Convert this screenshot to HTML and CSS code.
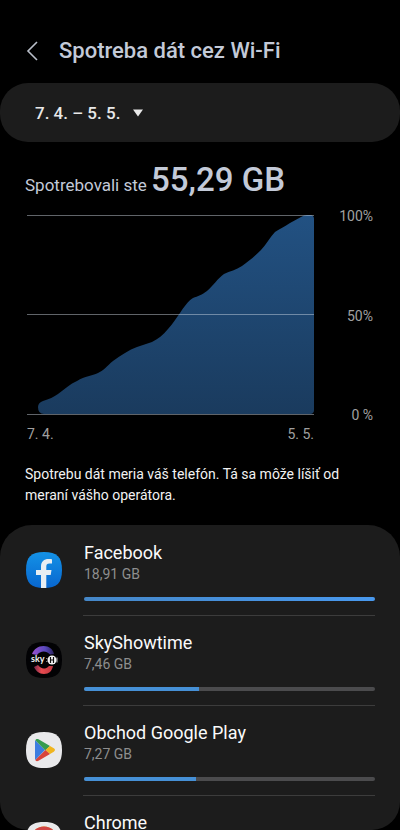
FILE: index.html
```html
<!DOCTYPE html>
<html lang="sk">
<head>
<meta charset="utf-8">
<meta name="viewport" content="width=device-width, initial-scale=1">
<title>Spotreba dát cez Wi-Fi</title>
<link rel="stylesheet" href="styles.css">
</head>
<body>
<header class="header">
  <button class="back" type="button" aria-label="Späť">
    <svg width="12" height="20" viewBox="0 0 12 20"><path d="M11 1 2 10l9 9" fill="none" stroke="currentColor" stroke-width="1.6"/></svg>
  </button>
  <h1 class="title">Spotreba dát cez Wi-Fi</h1>
</header>
<main class="content">
  <label class="period">
    <select class="period-select" aria-label="Obdobie"><option>7. 4. – 5. 5.</option></select>
    <svg class="caret" width="10" height="8" viewBox="0 0 10 8"><path d="M0 .5h10L5 7.5z" fill="currentColor"/></svg>
  </label>
  <section class="usage">
    <p class="total">Spotrebovali ste <strong class="amount">55,29 GB</strong></p>
    <div class="chart">
      <svg class="plot" viewBox="0 0 287 200" preserveAspectRatio="none">
        <defs><linearGradient id="area" x1="0" y1="0" x2="0" y2="1"><stop offset="0" stop-color="#225182"/><stop offset="1" stop-color="#1a3b5e"/></linearGradient></defs>
        <path fill="url(#area)" d="M11 192C11 189 13 187 16 186C22 184 27 182 31 179C38 174 43 169 50 166C58 161 65 161 71 158C76 156 80 151 86 146C94 140 102 135 110 132C115 130 120 129 125 127C131 124 136 120 141 114C146 109 149 103 153 98C157 92 161 86 166 83C171 81 175 80 180 76C186 71 191 63 197 59C203 56 209 55 215 51C221 47 228 41 234 35C239 30 243 22 248 17C252 14 257 12 263 8L274 2Q277 0 280 0H283Q287 0 287 4V195Q287 199 283 199H17Q11 199 11 192Z"/>
        <path d="M0 .5h287M0 99.5h287M0 199.5h287" stroke="#d5dde8" stroke-opacity=".45"/>
      </svg>
      <div class="y-axis"><span>100%</span><span>50%</span><span>0 %</span></div>
      <div class="x-axis"><span>7. 4.</span><span>5. 5.</span></div>
    </div>
    <p class="note">Spotrebu dát meria váš telefón. Tá sa môže líšiť od meraní vášho operátora.</p>
  </section>
  <ul class="apps">
    <li class="app">
      <svg class="icon" viewBox="0 0 36 36">
        <defs><linearGradient id="fb" x1="0" y1="0" x2="0" y2="1"><stop offset="0" stop-color="#1492e6"/><stop offset="1" stop-color="#0866cf"/></linearGradient></defs>
        <path fill="url(#fb)" d="M18 0C31 0 36 5 36 18S31 36 18 36 0 31 0 18 5 0 18 0Z"/>
        <path fill="#e8edf2" d="M15 36V23h-5v-5h5v-3.500C15 9.500 18 7 22.500 7c1.500 0 3 .2 3.500.3v4.200h-2.500c-2.500 0-3.200 1.200-3.200 3V18h5.200l-.8 5h-4.400v13Z"/>
      </svg>
      <div class="details">
        <h2 class="name">Facebook</h2>
        <p class="size">18,91 GB</p>
        <progress class="bar full" max="1891" value="1891" aria-label="Facebook"></progress>
      </div>
    </li>
    <li class="app">
      <svg class="icon" viewBox="0 0 36 36">
        <defs>
          <linearGradient id="skyTop"><stop offset="0" stop-color="#9a51cf"/><stop offset=".6" stop-color="#5848bd"/><stop offset="1" stop-color="#29235c"/></linearGradient>
          <linearGradient id="skyBottom"><stop offset="0" stop-color="#78294f"/><stop offset=".4" stop-color="#e84b50"/><stop offset="1" stop-color="#bd3540"/></linearGradient>
        </defs>
        <path fill="#020204" d="M18 0C31 0 36 5 36 18S31 36 18 36 0 31 0 18 5 0 18 0Z"/>
        <path fill="url(#skyTop)" d="M6 12C8 7 12 4 17.500 4S27 7 28 12L24 12.500C20 8 14 9 11 13Z"/>
        <path fill="url(#skyBottom)" d="M8 25C10 29 13 32 18 32s8-3 9-8h-4c-4 4-8 3-11-1Z"/>
        <text class="sky-text" x="5" y="20">sky</text>
        <circle cx="26" cy="18" r="4.500" fill="#f4f4f6"/>
        <path d="M24.500 15v6M27.500 15v6M24.500 18h3" stroke="#111" stroke-width="1.200"/>
        <path d="M20.800 16v1m0 2v1M31 15.500v5" stroke="#ddd" stroke-width=".8"/>
      </svg>
      <div class="details">
        <h2 class="name">SkyShowtime</h2>
        <p class="size">7,46 GB</p>
        <progress class="bar" max="1891" value="746" aria-label="SkyShowtime"></progress>
      </div>
    </li>
    <li class="app">
      <svg class="icon" viewBox="0 0 36 36">
        <path fill="#e9e9eb" d="M18 0C31 0 36 5 36 18S31 36 18 36 0 31 0 18 5 0 18 0Z"/>
        <path fill="#3c7de0" d="M9.300 8.200 19 18 9.300 28C9 27.500 9 27 9 26.500v-17c0-.5 0-.9.3-1.300Z"/>
        <path fill="#359c4f" d="M9.300 8.200c.7-1.500 2-1.600 3.200-.9L24 14l-4.600 4.400Z"/>
        <path fill="#f0b51f" d="m24 14 3.800 2.300c1.600.9 1.600 2.500 0 3.400L24 22l-4.600-4Z"/>
        <path fill="#d8453b" d="m19.400 18 4.600 4-11.500 6.700c-1.200.8-2.500.6-3.200-.7Z"/>
      </svg>
      <div class="details">
        <h2 class="name">Obchod Google Play</h2>
        <p class="size">7,27 GB</p>
        <progress class="bar" max="1891" value="727" aria-label="Obchod Google Play"></progress>
      </div>
    </li>
    <li class="app">
      <svg class="icon" viewBox="0 0 36 36">
        <path fill="#e9e9eb" d="M18 0C31 0 36 5 36 18S31 36 18 36 0 31 0 18 5 0 18 0Z"/>
        <circle cx="18" cy="18" r="13.500" fill="#f0b51f"/>
        <path fill="#359c4f" d="M6.300 11.200A13.500 13.500 0 0 0 18 31.500l6-10Z"/>
        <path fill="#d14545" d="M6.300 11.200a13.500 13.500 0 0 1 23.400 0Z"/>
        <circle cx="18" cy="18" r="6.500" fill="#e9e9eb"/><circle cx="18" cy="18" r="5" fill="#3c7de0"/>
      </svg>
      <div class="details">
        <h2 class="name">Chrome</h2>
      </div>
    </li>
  </ul>
</main>
</body>
</html>
```
FILE: styles.css
```css
* { box-sizing: border-box; }
body {
  margin: 0;
  height: 100vh;
  display: flex;
  flex-direction: column;
  overflow: hidden;
  background: #000;
  color: #f2f2f2;
  font-family: Roboto, "Noto Sans", sans-serif;
}
h1, h2, p, ul { margin: 0; padding: 0; font-weight: 400; }
svg { display: block; }
.header {
  flex: none;
  display: flex;
  align-items: center;
  gap: 21px;
  padding: 36px 26px 17px;
}
.back {
  padding: 0;
  border: 0;
  background: none;
  color: #b9bfca;
}
.title {
  font-size: 22px;
  line-height: 30px;
  font-weight: 500;
  color: #c3cad8;
}
.content {
  flex: 1;
  min-height: 0;
  display: flex;
  flex-direction: column;
  overflow: hidden;
  border-radius: 0 0 28px 28px;
}
.period {
  flex: none;
  display: flex;
  align-items: center;
  gap: 12px;
  height: 59px;
  padding: 0 35px;
  border-radius: 28px;
  background: #1c1c1c;
  color: #e8e8e8;
}
.period-select {
  appearance: none;
  padding: 0;
  border: 0;
  background: none;
  color: inherit;
  font: 500 17px/24px Roboto, sans-serif;
}
.usage { flex: none; padding: 16px 25px 19px; }
.total {
  font-size: 17px;
  line-height: 44px;
  color: #c3cad8;
}
.amount { font-size: 33px; font-weight: 500; }
.chart {
  display: grid;
  grid-template-columns: 1fr 59px;
  row-gap: 9px;
  padding: 8px 2px 0;
  font-size: 14px;
  line-height: 20px;
  color: #a0a0a0;
}
.plot { width: 100%; height: 200px; }
.y-axis {
  display: flex;
  flex-direction: column;
  justify-content: space-between;
  margin: -9px 0 -10px;
  text-align: right;
}
.x-axis { display: flex; justify-content: space-between; }
.note { margin-top: 20px; font-size: 14px; line-height: 21px; }
.apps {
  flex: 1 0 auto;
  padding-top: 1px;
  list-style: none;
  border-radius: 32px 32px 0 0;
  background: #1c1c1c;
}
.app { display: flex; gap: 21px; padding: 0 25px 0 26px; }
.icon { flex: none; width: 36px; height: 36px; margin-top: 26px; }
.sky-text { font: 700 9px Lato, sans-serif; fill: #f4f4f6; }
.details {
  flex: 1;
  padding: 16px 0 14px 1px;
  border-bottom: 1px solid #3c3c3c;
}
.name { font-size: 18px; line-height: 22px; color: #fafafa; }
.size { font-size: 14px; line-height: 20px; color: #8e8e8e; }
.bar {
  appearance: none;
  display: block;
  width: 100%;
  height: 4px;
  margin-top: 13px;
  border: 0;
  border-radius: 2px;
  overflow: hidden;
  background: #4b4b4d;
}
.bar::-webkit-progress-bar { background: #4b4b4d; }
.bar::-webkit-progress-value { background: #4690d6; }
.full::-webkit-progress-value { background: linear-gradient(90deg, #4587c8, #4999ee); }
```
